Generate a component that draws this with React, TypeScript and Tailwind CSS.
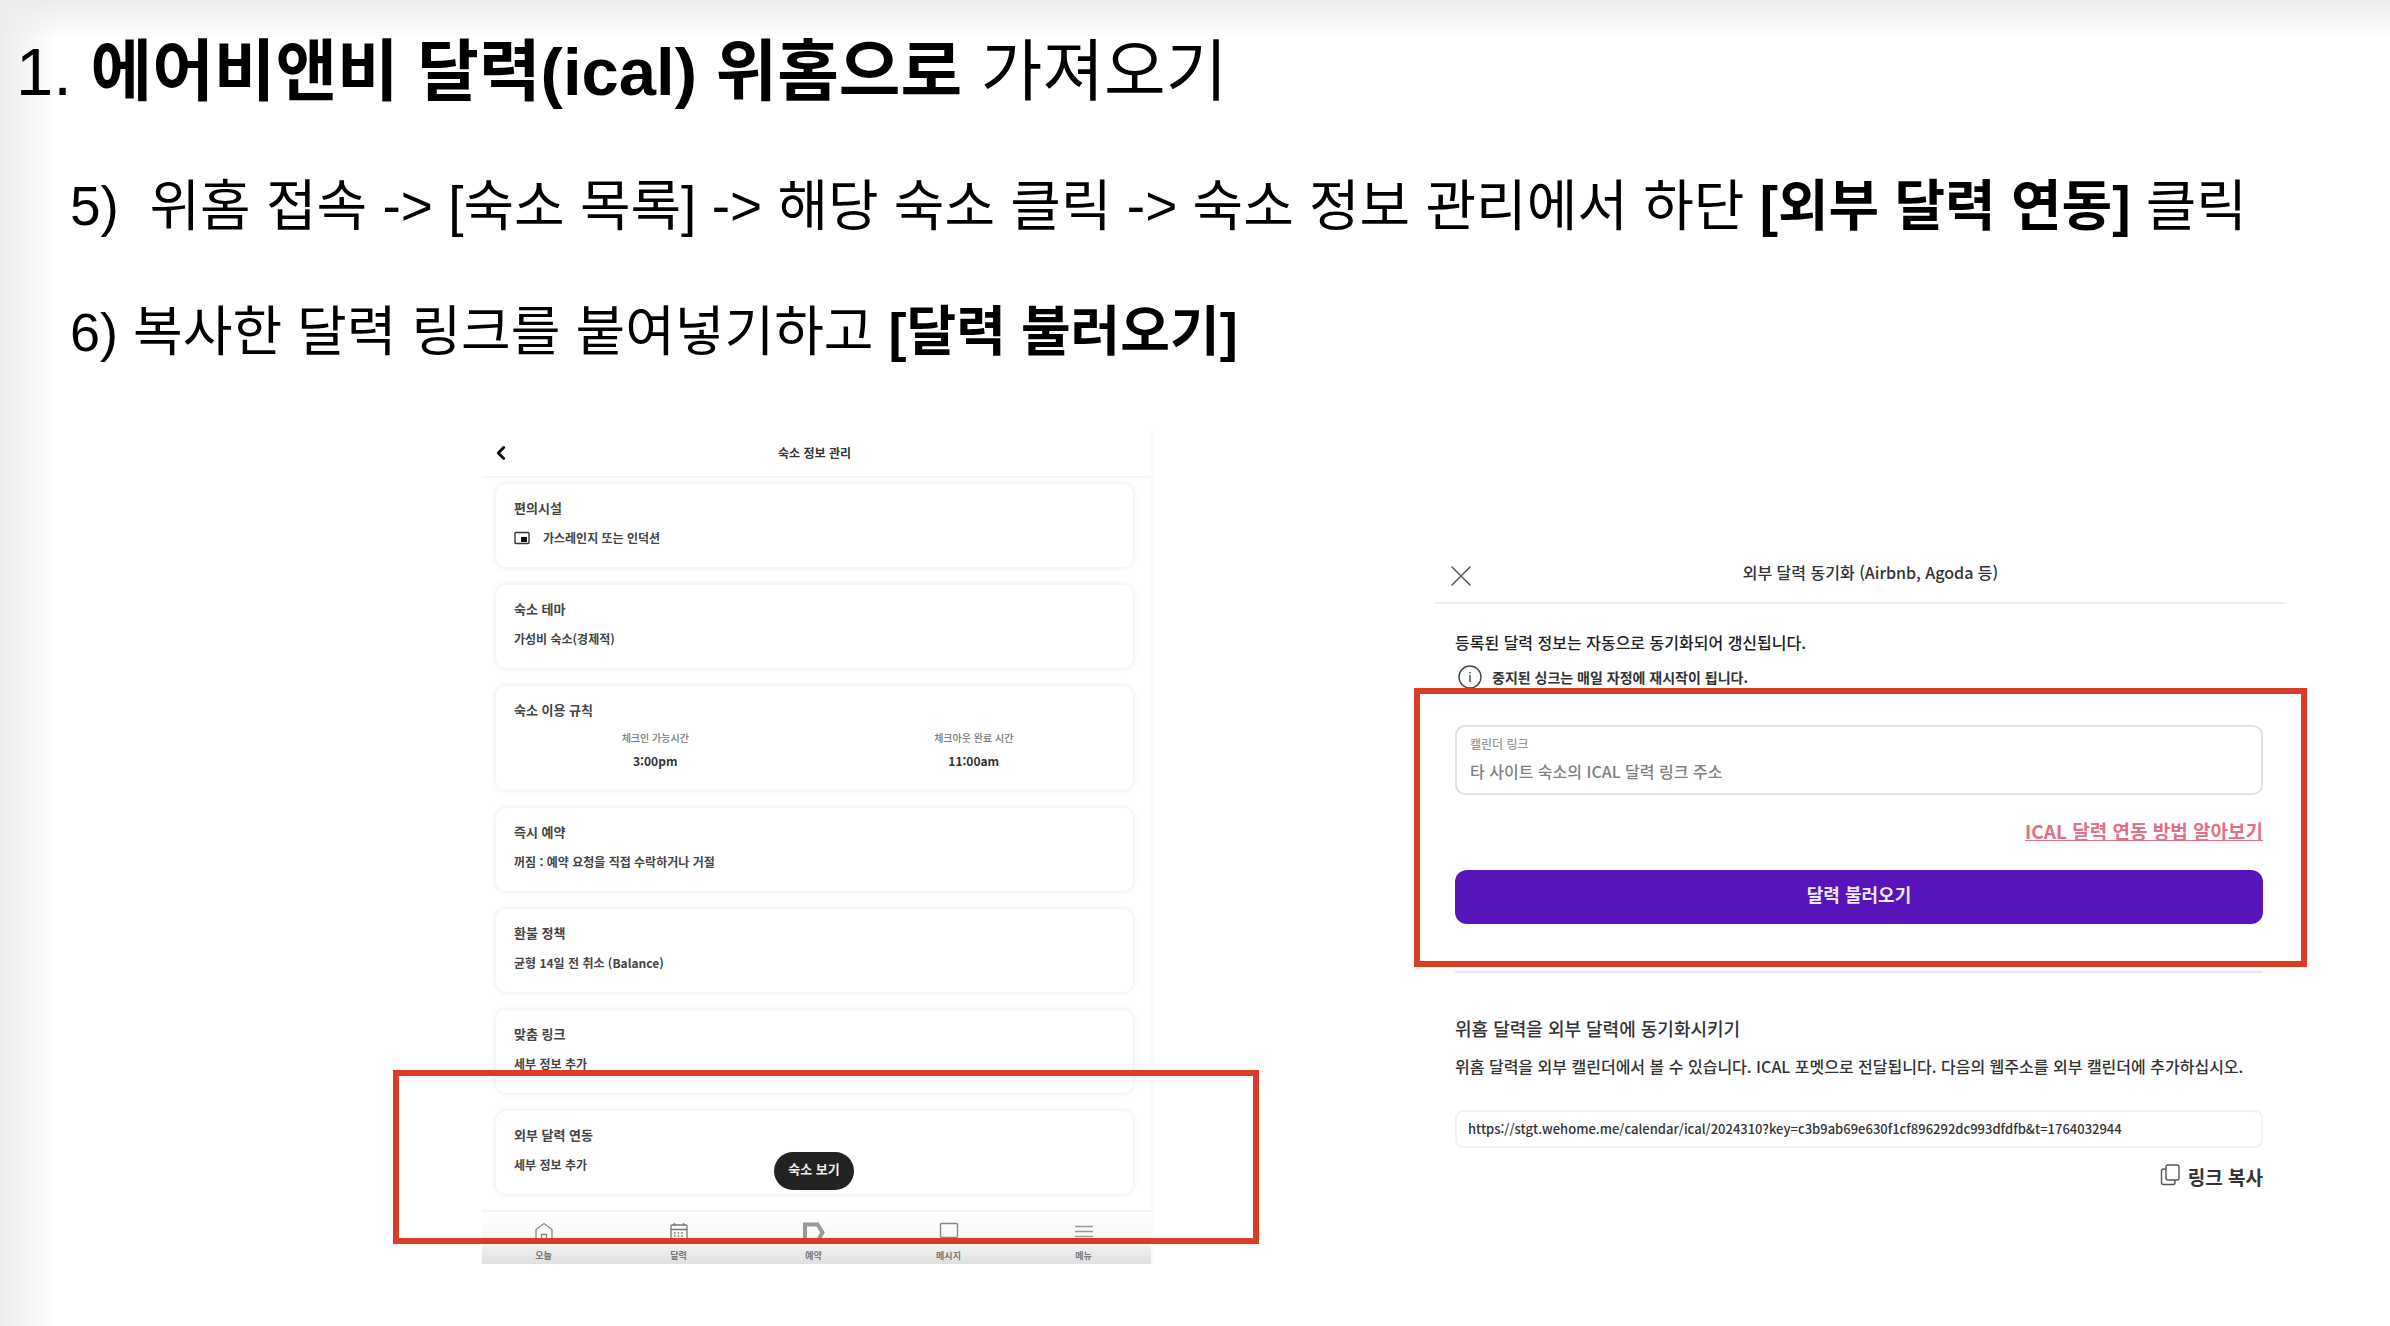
import type { ReactNode } from "react";
import { ChevronLeft, X } from "lucide-react";

type InfoCardProps = { title: string; children: ReactNode };

const InfoCard = ({ title, children }: InfoCardProps) => {
  return (
    <section className="rounded-[10px] bg-white pt-[14px] pb-[19px] shadow-[0_0_6px_rgba(0,0,0,0.1)]">
      <h3 className="px-[18px] text-[13px] leading-5 font-semibold text-[#444]">{title}</h3>
      {children}
    </section>
  );
};

const CardText = ({ children }: { children: ReactNode }) => {
  return <p className="mt-[10px] flex items-center px-[18px] text-xs leading-5 font-semibold text-[#444]">{children}</p>;
};

const StoveIcon = () => (
  <svg viewBox="0 0 16 14" className="mr-[13px] h-[14px] w-4" fill="none" stroke="#333">
    <rect x="1" y="1.5" width="14" height="11" rx="1" strokeWidth="1.4" />
    <rect x="7.5" y="6.5" width="5" height="4" fill="#111" stroke="#111" />
  </svg>
);

const HomeIcon = () => (
  <svg viewBox="0 0 18 20" className="h-5 w-[18px]" fill="none" stroke="#888" strokeWidth="1.3">
    <path d="M1 19V7.5L9 1.5l8 6V19z" />
    <path d="M6.5 19v-6.5h5V19" />
  </svg>
);

const CalendarIcon = () => (
  <svg viewBox="0 0 18 20" className="h-5 w-[18px]" fill="none" stroke="#777" strokeWidth="1.3">
    <rect x="1" y="3" width="16" height="15" rx="1" />
    <path d="M1 7.5h16M4.5 1v3M13.5 1v3" />
    <path d="M4 11h10M4 14h10" strokeDasharray="1.6 2" />
  </svg>
);

const BookingIcon = () => (
  <svg viewBox="0 0 24 22" className="h-[22px] w-6" fill="none" stroke="#999" strokeWidth="4">
    <path d="M3 2.5h12.5l5 8-5 8.5H3z" />
  </svg>
);

const MessageIcon = () => (
  <svg viewBox="0 0 20 20" className="h-5 w-5" fill="none" stroke="#888" strokeWidth="1.4">
    <rect x="1.5" y="1.5" width="17" height="14" rx="1" />
  </svg>
);

const MenuIcon = () => (
  <svg viewBox="0 0 20 20" className="h-5 w-5" stroke="#999" strokeWidth="1.4">
    <path d="M1 4.5h18M1 9.5h18M1 14.5h18" />
  </svg>
);

const CopyIcon = () => (
  <svg viewBox="0 0 20 22" className="mb-1 h-[22px] w-5" fill="none" stroke="#555" strokeWidth="1.4">
    <rect x="6" y="1" width="13" height="15" rx="2" />
    <path d="M6 5H3.5a2 2 0 0 0-2 2v11.5a2 2 0 0 0 2 2H13a2 2 0 0 0 2-2V16" />
  </svg>
);

const tabs = [
  { label: "오늘", icon: <HomeIcon /> },
  { label: "달력", icon: <CalendarIcon /> },
  { label: "예약", icon: <BookingIcon /> },
  { label: "메시지", icon: <MessageIcon /> },
  { label: "메뉴", icon: <MenuIcon /> },
];

const ListingPanel = () => {
  return (
    <div className="relative col-start-2 self-start border-r-2 border-[#fafafa]">
      <header className="flex h-[49px] items-center border-b-2 border-[#f6f6f6] px-2">
        <button aria-label="뒤로" className="w-6">
          <ChevronLeft size={22} strokeWidth={3} className="text-black" />
        </button>
        <h2 className="flex-1 pr-7 text-center text-xs font-semibold text-[#333]">숙소 정보 관리</h2>
      </header>

      <div className="flex flex-col gap-[18px] pt-[6px] pr-[18px] pb-4 pl-[14px]">
        <InfoCard title="편의시설">
          <CardText>
            <StoveIcon />
            가스레인지 또는 인덕션
          </CardText>
        </InfoCard>
        <InfoCard title="숙소 테마">
          <CardText>가성비 숙소(경제적)</CardText>
        </InfoCard>
        <InfoCard title="숙소 이용 규칙">
          <dl className="mt-[10px] grid grid-cols-2 text-center font-medium">
            <div>
              <dt className="text-[10px] leading-4 text-[#777]">체크인 가능시간</dt>
              <dd className="mt-[5px] text-xs leading-5 font-semibold text-[#333]">3:00pm</dd>
            </div>
            <div>
              <dt className="text-[10px] leading-4 text-[#777]">체크아웃 완료 시간</dt>
              <dd className="mt-[5px] text-xs leading-5 font-semibold text-[#333]">11:00am</dd>
            </div>
          </dl>
        </InfoCard>
        <InfoCard title="즉시 예약">
          <CardText>꺼짐 : 예약 요청을 직접 수락하거나 거절</CardText>
        </InfoCard>
        <InfoCard title="환불 정책">
          <CardText>균형 14일 전 취소 (Balance)</CardText>
        </InfoCard>
        <InfoCard title="맞춤 링크">
          <CardText>세부 정보 추가</CardText>
        </InfoCard>
        <InfoCard title="외부 달력 연동">
          <CardText>세부 정보 추가</CardText>
        </InfoCard>
      </div>

      <nav className="border-t-2 border-[#f4f4f4] bg-linear-to-b from-white via-[#f8f8f8] to-[#e0e0e0]">
        <div className="-ml-[6px] grid h-[52px] grid-cols-5">
          {tabs.map((tab) => (
            <a
              key={tab.label}
              href="#"
              className="flex flex-col items-center justify-between pt-[10px] pb-[2px] text-[9px] leading-3 font-semibold text-[#777]"
            >
              {tab.icon}
              {tab.label}
            </a>
          ))}
        </div>
      </nav>

      <div className="absolute inset-x-0 bottom-[74px] flex justify-center pr-[5px]">
        <button className="h-[38px] w-20 rounded-full bg-[#222] pb-1 text-[13px] font-semibold text-[#eee]">숙소 보기</button>
      </div>
      {/* red marker around the calendar link card */}
      <div className="pointer-events-none absolute -right-[108px] bottom-5 -left-[89px] h-[174px] border-6 border-[#dc3b26]" />
    </div>
  );
};

const SyncPanel = () => {
  return (
    <div className="relative col-start-4 self-start pt-[117px] font-medium">
      <header className="flex h-[58px] items-center border-b-2 border-[#eee] px-2">
        <button aria-label="닫기" className="w-9 pt-1">
          <X size={36} strokeWidth={1} className="text-[#555]" />
        </button>
        <h2 className="flex-1 pr-4 pb-1 text-center text-base text-[#333]">외부 달력 동기화 (Airbnb, Agoda 등)</h2>
      </header>

      <div className="pr-[23px] pl-5">
        <p className="mt-[26px] text-base leading-6 text-[#222]">등록된 달력 정보는 자동으로 동기화되어 갱신됩니다.</p>
        <p className="mt-[11px] flex items-center text-[14px] leading-6 font-semibold text-[#333]">
          <svg viewBox="0 0 24 24" className="mr-[10px] ml-[3px] h-6 w-6" fill="none" stroke="#444" strokeWidth="1.4">
            <circle cx="12" cy="12" r="11" />
            <path d="M12 10v7M12 7v1.5" />
          </svg>
          중지된 싱크는 매일 자정에 재시작이 됩니다.
        </p>

        <div className="mt-9 h-[70px] rounded-[10px] border-2 border-[#e0e0e0] px-[13px] pt-[7px]">
          <label htmlFor="ical" className="block text-xs leading-5 text-[#999]">
            캘린더 링크
          </label>
          <input
            id="ical"
            type="text"
            placeholder="타 사이트 숙소의 ICAL 달력 링크 주소"
            className="mt-[3px] block h-7 w-full text-base outline-none placeholder:text-[#808080]"
          />
        </div>
        <div className="mt-[22px] text-right">
          <a href="#" className="text-[19px] leading-7 font-semibold text-[#e0708a] underline">
            ICAL 달력 연동 방법 알아보기
          </a>
        </div>
        <button className="mt-[25px] h-[54px] w-full rounded-xl bg-[#5714bb] pb-[6px] text-lg font-semibold text-[#eee8f8]">
          달력 불러오기
        </button>

        <hr className="mt-[47px] border-t-2 border-[#e8e8e8]" />

        <h2 className="mt-[41px] text-lg leading-7 text-[#333]">위홈 달력을 외부 달력에 동기화시키기</h2>
        <p className="mt-3 text-base leading-6 text-[#333]">
          위홈 달력을 외부 캘린더에서 볼 수 있습니다. ICAL 포멧으로 전달됩니다. 다음의 웹주소를 외부 캘린더에 추가하십시오.
        </p>
        <input
          type="text"
          readOnly
          aria-label="위홈 달력 주소"
          value="https://stgt.wehome.me/calendar/ical/2024310?key=c3b9ab69e630f1cf896292dc993dfdfb&t=1764032944"
          className="mt-8 block h-[38px] w-full rounded-lg border-2 border-[#f2f2f2] px-[11px] pb-[2px] text-[13px] text-[#333] outline-none"
        />
        <button className="mt-[13px] ml-auto flex items-center gap-2 text-[19px] leading-8 font-semibold text-[#333]">
          <CopyIcon />
          링크 복사
        </button>
      </div>

      {/* red marker around the import form */}
      <div className="pointer-events-none absolute -inset-x-[21px] top-[259px] h-[279px] border-6 border-[#dc3b26]" />
    </div>
  );
};

const App = () => {
  return (
    <main
      lang="ko"
      className="relative min-h-screen overflow-hidden bg-white pb-[61px] font-['Liberation_Sans','Noto_Sans_CJK_KR',sans-serif] text-black"
    >
      <div className="pointer-events-none absolute inset-x-0 top-0 h-10 bg-linear-to-b from-[#ebebeb] to-transparent" />
      <div className="pointer-events-none absolute inset-y-0 left-0 w-14 bg-linear-to-r from-[#ececec] to-transparent" />

      <h1 className="relative pt-[26px] pl-4 text-[67px] leading-[92px]">
        1. <b>에어비앤비 달력(ical) 위홈으로</b> 가져오기
      </h1>
      <div className="relative flex flex-col gap-[46px] pt-12 pl-[70px] leading-20">
        <p className="text-[55px]">
          5)&nbsp; 위홈 접속 -&gt; [숙소 목록] -&gt; 해당 숙소 클릭 -&gt; 숙소 정보 관리에서 하단 <b>[외부 달력 연동]</b> 클릭
        </p>
        <p className="text-[54px]">
          6) 복사한 달력 링크를 붙여넣기하고 <b>[달력 불러오기]</b>
        </p>
      </div>

      <div className="relative grid grid-cols-[482fr_671fr_282fr_851fr_104fr] pt-[57px] font-['Noto_Sans_CJK_KR',sans-serif]">
        <ListingPanel />
        <SyncPanel />
      </div>
    </main>
  );
};

export default App;
